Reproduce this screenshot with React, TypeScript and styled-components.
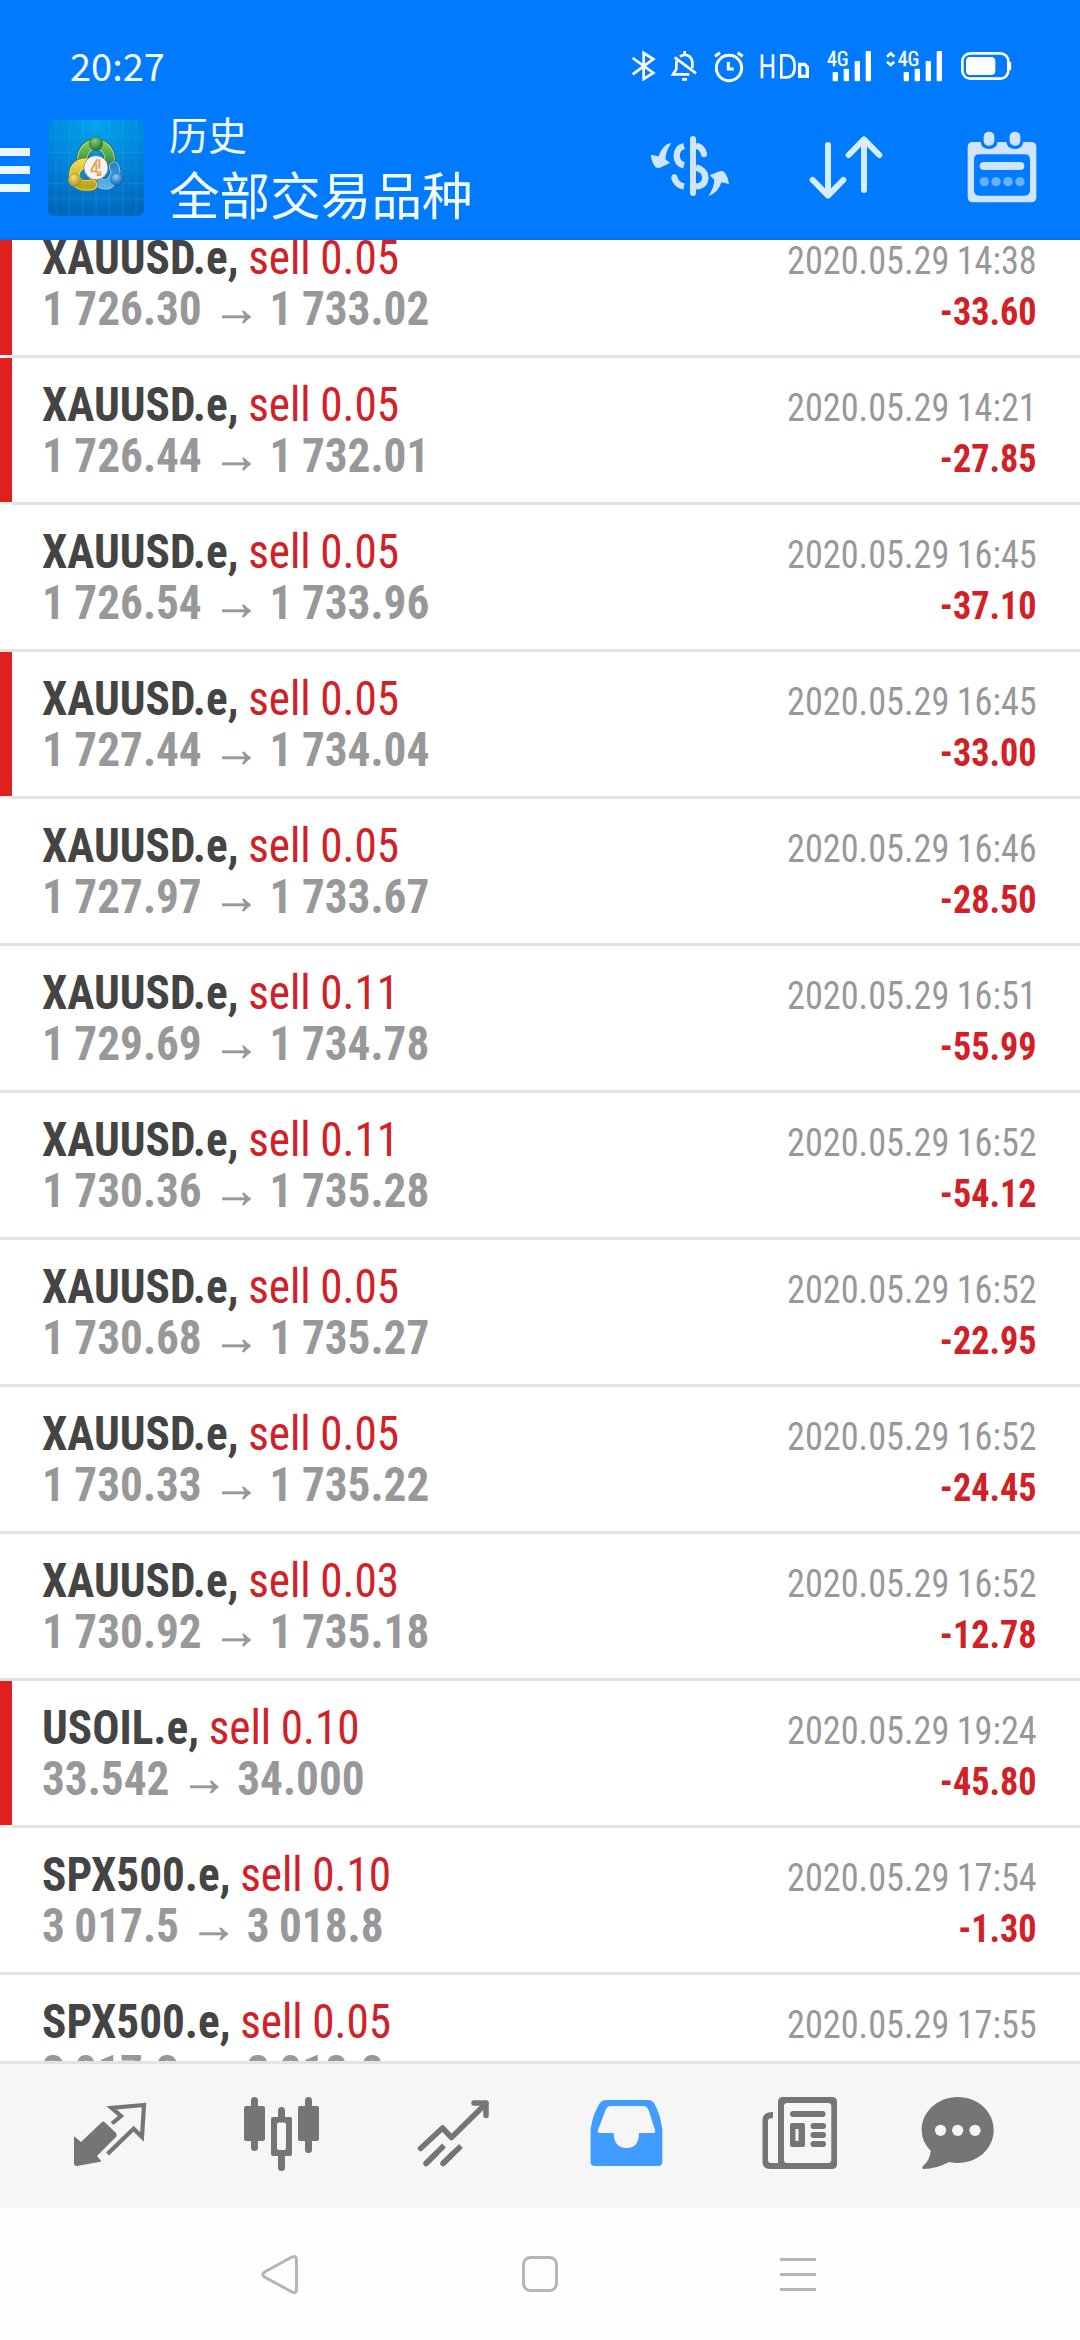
import React from "react";
import styled, { createGlobalStyle } from "styled-components";

const GlobalStyle = createGlobalStyle`
  *, *::before, *::after { box-sizing: border-box; }
  html, body { margin: 0; padding: 0; background: #fff; }
`;

const cjk = `"Noto Sans CJK SC", "Noto Sans", sans-serif`;
const condensed = `"Roboto Condensed", Roboto, sans-serif`;

const Screen = styled.div`
  width: 1080px;
  height: 2340px;
  display: flex;
  flex-direction: column;
  overflow: hidden;
  background: #fff;
`;

const Header = styled.header`
  flex: none;
  height: 240px;
  background: linear-gradient(#007aff 236px, #0a6ce0 240px);
  color: #f2fbff;
`;

const StatusBar = styled.div`
  height: 96px;
  padding: 0 64px 0 70px;
  display: flex;
  justify-content: space-between;
`;

const Clock = styled.span`
  font: 400 38px/130px ${cjk};
`;

const StatusIcons = styled.div`
  display: flex;
  padding-top: 46px;
`;

const Toolbar = styled.div`
  height: 144px;
  display: flex;
  align-items: center;
`;

const MenuButton = styled.div`
  width: 30px;
  height: 44px;
  margin: 4px 18px 0 0;
  display: flex;
  flex-direction: column;
  justify-content: space-between;
`;

const MenuBar = styled.i`
  height: 8px;
  background: #eaf7ff;
`;

const Titles = styled.div`
  flex: 1;
  padding: 0 0 5px 25px;
  white-space: nowrap;
`;

const Subtitle = styled.div`
  font: 400 39px/54px ${cjk};
`;

const Title = styled.div`
  font: 400 50.6px/66px ${cjk};
`;

const Actions = styled.div`
  display: flex;
`;

const List = styled.main`
  flex: none;
  height: 1821px;
  overflow: hidden;
  display: flex;
  flex-direction: column;
  justify-content: flex-start;
`;

const Scroller = styled.div`
  margin-top: -29px;
`;

const Row = styled.div<{ $flag?: boolean }>`
  height: 147px;
  display: flex;
  justify-content: space-between;
  padding: 21px 43px 0 42px;
  background:
    linear-gradient(${(p) => (p.$flag ? "#e01f1f, #e01f1f" : "#fff, #fff")}) 0 0 / 12px 144px no-repeat,
    linear-gradient(${(p) => (p.$flag ? "#fff0f0, #fff0f0" : "#e3e3e3, #e3e3e3")}) 0 144px / 12px 3px no-repeat,
    linear-gradient(#e3e3e3, #e3e3e3) 12px 144px / 1068px 3px no-repeat;
  white-space: nowrap;
  font-family: ${condensed};
  font-stretch: 75%;
`;

const Deal = styled.div`
  font-size: 48px;
  line-height: 51px;
  font-weight: 700;
  color: #444;
  word-spacing: -1px;
  transform: scaleX(0.942);
  transform-origin: left;
`;

const Side = styled.span`
  font-weight: 400;
  color: #d32027;
`;

const Prices = styled.div`
  display: flex;
  color: #98989a;
`;

const Arrow = styled.span`
  width: 72px;
  height: 51px;
  padding-left: 2px;
  display: flex;
  justify-content: center;
  align-items: baseline;
  font: 400 50px/50px "Liberation Sans", sans-serif;
  -webkit-text-stroke: 0.8px #98989a;
`;

const Outcome = styled.div`
  font-size: 39px;
  line-height: 51px;
  padding-top: 4px;
  text-align: right;
  color: #98989a;
  word-spacing: -1px;
  transform: scaleX(0.929);
  transform-origin: right;
`;

const Profit = styled.div`
  font-weight: 700;
  color: #d32027;
`;

const TabBar = styled.nav`
  flex: none;
  height: 147px;
  border-top: 3px solid #e3e3e3;
  background: #f6f6f6;
  padding: 0 24px;
  display: flex;
  color: #757575;
`;

const SystemBar = styled.footer`
  flex: 1;
  display: flex;
  padding: 0 150px;
  color: #b5b5b5;
  background: #fefefe;
`;

const StatusIcon = ({ x, w, children }: { x: number; w: number; children: React.ReactNode }) => (
  <svg width={w} height={40} viewBox={`${x} 48 ${w * 3} 120`} fill="none" stroke="#fff" strokeWidth={9}>
    {children}
  </svg>
);

const ActionIcon = ({ i, children }: { i: number; children: React.ReactNode }) => (
  <svg width={156} height={144} viewBox={`${36 + i * 468} 198 468 432`} fill="#cfe5ff" stroke="none">
    {children}
  </svg>
);

const TabIcon = ({ i, children }: { i: number; children: React.ReactNode }) => (
  <svg width={172} height={144} viewBox={`${24 + 172 * i} 24 172 144`} fill="currentColor">
    {children}
  </svg>
);

const SystemIcon = ({ i, children }: { i: number; children: React.ReactNode }) => (
  <svg width={260} height={132} viewBox={`${150 + 260 * i} 168 260 132`} fill="none" stroke="currentColor" strokeWidth={3}>
    {children}
  </svg>
);

const SvgLabel = styled.text`
  font: 400 60px ${condensed};
  font-stretch: 75%;
  fill: #fff;
  stroke: #fff;
  stroke-width: 1px;
`;

const Signal = ({ x }: { x: number }) => (
  <g fill="#fff" stroke="none">
    <rect x={x} y={126} width={16} height={28} rx={3} />
    <rect x={x + 33} y={116} width={16} height={38} rx={3} />
    <rect x={x + 66} y={93} width={16} height={61} rx={3} />
    <rect x={x + 99} y={63} width={16} height={91} rx={3} />
  </g>
);

const Logo = () => (
  <svg width={96} height={96} viewBox="24 30 288 288">
    <defs>
      <radialGradient id="lbg" cx="0.5" cy="0" r="1.05">
        <stop offset="0" stopColor="#02a6ef" />
        <stop offset="0.55" stopColor="#0083d8" />
        <stop offset="1" stopColor="#0065bb" />
      </radialGradient>
      <linearGradient id="lg" x1="0" y1="0" x2="0" y2="1">
        <stop offset="0" stopColor="#7cc45e" />
        <stop offset="1" stopColor="#2b8a3c" />
      </linearGradient>
      <linearGradient id="ly" x1="0" y1="0" x2="0" y2="1">
        <stop offset="0" stopColor="#ecd748" />
        <stop offset="1" stopColor="#b9a51e" />
      </linearGradient>
      <linearGradient id="lb" x1="0" y1="0" x2="0" y2="1">
        <stop offset="0" stopColor="#2787c8" />
        <stop offset="1" stopColor="#56b2ea" />
      </linearGradient>
      <radialGradient id="hg" cx="0.4" cy="0.3" r="0.7">
        <stop offset="0" stopColor="#8fd07a" />
        <stop offset="1" stopColor="#1d7434" />
      </radialGradient>
      <radialGradient id="hy" cx="0.4" cy="0.3" r="0.7">
        <stop offset="0" stopColor="#f2e27c" />
        <stop offset="1" stopColor="#a8921a" />
      </radialGradient>
      <radialGradient id="hb" cx="0.4" cy="0.3" r="0.7">
        <stop offset="0" stopColor="#8accf8" />
        <stop offset="1" stopColor="#0d62a8" />
      </radialGradient>
    </defs>
    <rect x={24} y={30} width={288} height={288} rx={22} fill="url(#lbg)" />
    <path
      d="M48 30V318M88 30V318M128 30V318M168 30V318M208 30V318M248 30V318M288 30V318M24 82H312M24 128H312M24 174H312M24 220H312M24 266H312"
      stroke="#5cc8ff"
      strokeOpacity={0.16}
      strokeWidth={3}
    />
    <g fill="none" strokeLinecap="round">
      <path d="M133 163A40 40 0 1 1 203 163" stroke="#2f6f3a" strokeWidth={36} />
      <path d="M133 163A40 40 0 1 1 203 163" stroke="#c5e39a" strokeWidth={31} />
      <path d="M133 163A40 40 0 1 1 203 163" stroke="url(#lg)" strokeWidth={26} />
      <path d="M222 170A40 40 0 0 1 205 222Q182 228 162 204" stroke="#1a62a0" strokeWidth={36} />
      <path d="M222 170A40 40 0 0 1 205 222Q182 228 162 204" stroke="#a5d8fa" strokeWidth={31} />
      <path d="M222 170A40 40 0 0 1 205 222Q182 228 162 204" stroke="url(#lb)" strokeWidth={26} />
      <path d="M138 160Q102 164 103 200Q112 234 156 224" stroke="#7c7420" strokeWidth={36} />
      <path d="M138 160Q102 164 103 200Q112 234 156 224" stroke="#f2e88a" strokeWidth={31} />
      <path d="M138 160Q102 164 103 200Q112 234 156 224" stroke="url(#ly)" strokeWidth={26} />
    </g>
    <circle cx={168} cy={101} r={20} fill="url(#hg)" stroke="#2d7a35" strokeWidth={2} />
    <circle cx={104} cy={210} r={19} fill="url(#hy)" stroke="#a99724" strokeWidth={2} />
    <circle cx={231} cy={208} r={19} fill="url(#hb)" stroke="#1a6db0" strokeWidth={2} />
    <circle cx={168} cy={173} r={36} fill="#f4f4f6" stroke="#777" strokeWidth={2} />
    <path d="M172 148L154 179V184H173V195H181V184M178 148V176M169 160V180" fill="none" stroke="#f09a45" strokeWidth={5.5} />
  </svg>
);

type Trade = [symbol: string, volume: string, open: string, close: string, time: string, profit: string, flag?: boolean];

const trades: Trade[] = [
  ["XAUUSD.e", "0.05", "1 726.30", "1 733.02", "14:38", "-33.60", true],
  ["XAUUSD.e", "0.05", "1 726.44", "1 732.01", "14:21", "-27.85", true],
  ["XAUUSD.e", "0.05", "1 726.54", "1 733.96", "16:45", "-37.10"],
  ["XAUUSD.e", "0.05", "1 727.44", "1 734.04", "16:45", "-33.00", true],
  ["XAUUSD.e", "0.05", "1 727.97", "1 733.67", "16:46", "-28.50"],
  ["XAUUSD.e", "0.11", "1 729.69", "1 734.78", "16:51", "-55.99"],
  ["XAUUSD.e", "0.11", "1 730.36", "1 735.28", "16:52", "-54.12"],
  ["XAUUSD.e", "0.05", "1 730.68", "1 735.27", "16:52", "-22.95"],
  ["XAUUSD.e", "0.05", "1 730.33", "1 735.22", "16:52", "-24.45"],
  ["XAUUSD.e", "0.03", "1 730.92", "1 735.18", "16:52", "-12.78"],
  ["USOIL.e", "0.10", "33.542", "34.000", "19:24", "-45.80", true],
  ["SPX500.e", "0.10", "3 017.5", "3 018.8", "17:54", "-1.30"],
  ["SPX500.e", "0.05", "3 017.3", "3 018.8", "17:55", ""],
];

export default function App() {
  return (
    <>
      <GlobalStyle />
      <Screen>
        <Header>
          <StatusBar>
            <Clock>20:27</Clock>
            <StatusIcons>
              <StatusIcon x={90} w={38}>
                <path d="M98 84L160 129L131 147V69L160 87L98 133" strokeWidth={8} />
              </StatusIcon>
              <StatusIcon x={204} w={42}>
                <path d="M229 92V117L219 133H268M240 80Q254 70 268 79Q277 86 277 98V115M224 82L288 130M254 63V74M246 148H261" strokeWidth={8} />
              </StatusIcon>
              <StatusIcon x={330} w={46}>
                <circle cx={387} cy={114} r={38} />
                <path d="M385 95V117H401M345 79L360 68M413 68L428 79" />
              </StatusIcon>
              <StatusIcon x={468} w={66}>
                <path d="M486 73V145M519 73V145M486 107H519M544 76V142H560Q584 142 584 109Q584 76 560 76H540" strokeWidth={8} />
                <path d="M599 103V139H622V112L614 103Z" strokeWidth={10} />
              </StatusIcon>
              <StatusIcon x={666} w={60}>
                <SvgLabel x={681} y={107}>4G</SvgLabel>
                <Signal x={698} />
              </StatusIcon>
              <StatusIcon x={846} w={74}>
                <path d="M861 80L872 70L883 80M861 95L872 105L883 95" strokeWidth={8} />
                <SvgLabel x={893} y={107}>4G</SvgLabel>
                <Signal x={911} />
              </StatusIcon>
              <StatusIcon x={1068} w={60}>
                <rect x={1087} y={70} width={138} height={76} rx={24} strokeWidth={8} />
                <rect x={1098} y={81} width={88} height={54} rx={12} fill="#fff" stroke="none" />
                <path d="M1229 96V120" />
              </StatusIcon>
            </StatusIcons>
          </StatusBar>
          <Toolbar>
            <MenuButton>
              <MenuBar />
              <MenuBar />
              <MenuBar />
            </MenuButton>
            <Logo />
            <Titles>
              <Subtitle>历史</Subtitle>
              <Title>全部交易品种</Title>
            </Titles>
            <Actions>
              <ActionIcon i={0}>
                <path d="M215 338Q186 344 176 379L152 374Q156 400 167 412Q172 416 180 413L210 399L196 387Q198 360 215 338Z" />
                <path d="M325 498Q354 490 364 457L387 462Q383 436 372 425Q366 421 359 424L329 436L343 449Q342 474 325 498Z" />
                <rect x={270} y={318} width={18} height={180} rx={9} />
                <path
                  d="M252 348Q230 354 230 377Q230 400 252 406M288 347Q308 352 312 372M288 412Q316 420 316 443Q316 466 288 470M252 470Q228 465 223 443"
                  fill="none"
                  stroke="#cfe5ff"
                  strokeWidth={19}
                />
                <circle cx={312} cy={373} r={9} />
                <circle cx={223} cy={442} r={9} />
              </ActionIcon>
              <ActionIcon i={1}>
                <g fill="none" stroke="#d6ecff" strokeWidth={18} strokeLinecap="round" strokeLinejoin="round">
                  <path d="M684 345V496M638 450L684 497L730 450" />
                  <path d="M792 480V329M746 375L792 328L838 375" />
                </g>
              </ActionIcon>
              <ActionIcon i={2}>
                <path
                  fillRule="evenodd"
                  d="M1118 336H1142Q1144 357 1167 357Q1190 357 1193 336H1219Q1222 357 1245 357Q1267 357 1270 336H1294Q1309 336 1309 351V502Q1309 517 1294 517H1118Q1103 517 1103 502V351Q1103 336 1118 336ZM1138 373Q1122 373 1122 389V480Q1122 497 1138 497H1274Q1290 497 1290 480V389Q1290 373 1274 373Z"
                />
                <rect x={1151} y={305} width={32} height={42} rx={15} />
                <rect x={1229} y={305} width={32} height={42} rx={15} />
                <rect x={1139} y={396} width={134} height={24} rx={12} />
                <g fill="#66b0ff">
                  <circle cx={1153} cy={455} r={14} />
                  <circle cx={1188} cy={455} r={14} />
                  <circle cx={1224} cy={455} r={14} />
                  <circle cx={1260} cy={455} r={14} />
                </g>
              </ActionIcon>
            </Actions>
          </Toolbar>
        </Header>

        <List>
          <Scroller>
            {trades.map(([symbol, volume, open, close, time, profit, flag], i) => (
              <Row key={i} $flag={flag}>
                <Deal>
                  {symbol}, <Side>sell {volume}</Side>
                  <Prices>
                    {open}
                    <Arrow>→</Arrow>
                    {close}
                  </Prices>
                </Deal>
                <Outcome>
                  2020.05.29 {time}
                  <Profit>{profit}</Profit>
                </Outcome>
              </Row>
            ))}
          </Scroller>
        </List>

        <TabBar>
          <TabIcon i={0}>
            <path d="M75 97L81 102L101.500 82.500Q103.300 80.500 105 82.500L116 93Q117.500 95 116 97L97 116L101.500 121.500L77 126Q74 126 74 123.500V96Z" />
            <path d="M112 83.500L121 76L111.500 67.800L144 65L142 97L133.600 88.700L107.500 114" fill="none" stroke="currentColor" strokeWidth={4.2} />
          </TabIcon>
          <TabIcon i={1}>
            <rect x={244} y={66} width={21} height={35} rx={2} />
            <rect x={251} y={57} width={7} height={54} rx={3.5} />
            <rect x={298} y={66} width={21} height={35} rx={2} />
            <rect x={305} y={57} width={7} height={56} rx={3.5} />
            <path fillRule="evenodd" d="M273 77H290Q292 77 292 79V114Q292 116 290 116H273Q271 116 271 114V79Q271 77 273 77ZM279 82.500Q277 82.500 277 84.500V108Q277 110 279 110H284Q286 110 286 108V84.500Q286 82.500 284 82.500Z" />
            <path d="M278 78V70.500A3.500 3.500 0 0 1 285 70.500V78ZM278 115V127.500A3.500 3.500 0 0 0 285 127.500V115Z" />
          </TabIcon>
          <TabIcon i={2}>
            <g fill="none" stroke="currentColor" strokeWidth={5.5} strokeLinecap="round" strokeLinejoin="round">
              <path d="M420.500 108.500L442.500 88L451.500 97.500L486 63.500" />
              <path d="M474 63H486V75.500" />
              <path d="M426 123.500L444 105.500M443 123.500L461 106" strokeLinecap="butt" />
              <path d="M426 123.500L436 113.500M443 123.500L453 113.500" />
            </g>
          </TabIcon>
          <TabIcon i={3}>
            <path
              fill="#409cff"
              fillRule="evenodd"
              d="M606 60H648Q652 60 654 63Q660 73 662.300 89V122Q662.300 126 658 126H595Q590.600 126 590.600 122V89Q593 73 600 63Q602 60 606 60ZM611 66Q607.500 66 606 69L598 90Q597 93 600 93H613.700Q614 108 626.500 108Q639 108 639 93H653Q656 93 655 90L648.500 70Q647 66 643 66Z"
            />
          </TabIcon>
          <TabIcon i={4}>
            <path
              fillRule="evenodd"
              d="M783 57H832Q837 57 837 62V124Q837 129 832 129H770Q762.500 129 762.500 122V80Q762.500 72 773 72V78Q768 78 768 81V120Q768 123 771 123H778V62Q778 57 783 57ZM787 63Q784 63 784 66V120Q784 123 787 123H828Q831.300 123 831.300 120V66Q831.300 63 828 63Z"
            />
            <rect x={790} y={71} width={35.5} height={6} rx={3} />
            <path fillRule="evenodd" d="M792 83H803Q805 83 805 85V105Q805 107 803 107H792Q790 107 790 105V85Q790 83 792 83ZM795.500 89V101H798.500V89Z" />
            <rect x={810.5} y={83} width={15.5} height={6} rx={3} />
            <rect x={810.5} y={92} width={15.5} height={6} rx={3} />
            <rect x={810.5} y={101} width={15.5} height={6} rx={3} />
          </TabIcon>
          <TabIcon i={5}>
            <path d="M957.700 57C978 57 993.700 71.500 993.700 90S978 123 957.700 123Q953 123 949 122Q936 129 924 129Q921 128.500 923 126Q930 120 930.800 111Q921.700 102 921.700 90C921.700 71.500 938 57 957.700 57Z" />
            <circle cx={940.5} cy={90.3} r={5.6} fill="#f6f6f6" />
            <circle cx={957.7} cy={90.3} r={5.6} fill="#f6f6f6" />
            <circle cx={975} cy={90.3} r={5.6} fill="#f6f6f6" />
          </TabIcon>
        </TabBar>

        <SystemBar>
          <SystemIcon i={0}>
            <path d="M264.500 232L292 217Q296.500 215 296.500 220V249Q296.500 254 292 252L264.500 237Q261 234.500 264.500 232Z" />
          </SystemIcon>
          <SystemIcon i={1}>
            <rect x={523.5} y={217.5} width={33} height={33} rx={7} />
          </SystemIcon>
          <SystemIcon i={2}>
            <path d="M780 219.500H816M780 234.500H816M780 249.500H816" />
          </SystemIcon>
        </SystemBar>
      </Screen>
    </>
  );
}
